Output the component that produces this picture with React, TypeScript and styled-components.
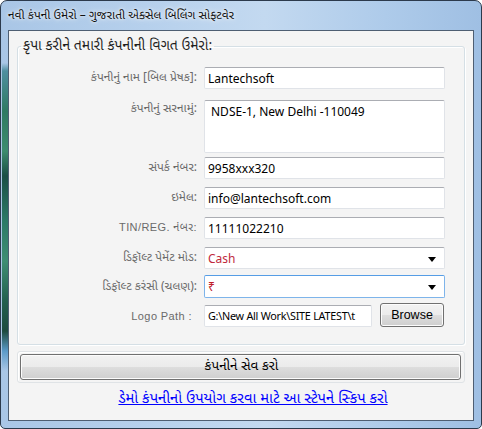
import React from "react";
import styled, { createGlobalStyle } from "styled-components";

const Global = createGlobalStyle`
  html, body { margin: 0; padding: 0; background: #ffffff; }
  * { box-sizing: border-box; }
`;

const GU = `"Noto Sans Gujarati", "Shruti", "Lohit Gujarati", "Noto Sans", "DejaVu Sans", sans-serif`;
const UI = `"Noto Sans", "Open Sans", "DejaVu Sans", sans-serif`;

const Window = styled.div`
  width: 482px;
  height: 429px;
  border: 1px solid #2c3a4c;
  border-radius: 7px 7px 5px 5px;
  display: flex;
  flex-direction: column;
  padding: 0 7px 7px 7px;
  background:
    linear-gradient(
        to bottom,
        rgba(0, 0, 0, 0) 0px,
        rgba(0, 0, 0, 0) 62px,
        #4f8fa0 70px,
        #2f7a62 110px,
        #3d8c6e 150px,
        #1b4f45 175px,
        #2c7a66 220px,
        #3f8e73 260px,
        #23604f 300px,
        #1d4a3e 330px,
        #5b9ac8 350px,
        rgba(0, 0, 0, 0) 370px
      )
      1px 0 / 6px 100% no-repeat,
    linear-gradient(
      to right,
      #a9c6e6 0%,
      #b6d0ec 30%,
      #c3d9f0 55%,
      #aecbea 80%,
      #9fbfe3 100%
    );
`;

const TitleBar = styled.div`
  height: 29px;
  display: flex;
  align-items: center;
  font-family: ${GU};
  font-size: 12px;
  color: #111;
  text-shadow: 0 0 6px rgba(255, 255, 255, 0.9), 0 0 3px rgba(255, 255, 255, 0.9);
`;

const Client = styled.div`
  flex: 1;
  border: 1px solid #4e5e72;
  background: #f4f4f4;
  display: flex;
  flex-direction: column;
  padding: 0 8px;
`;

const Group = styled.fieldset`
  margin: 6px 0 0 0;
  padding: 0 0 17px 0;
  border: 1px solid #d5dfe5;
  border-radius: 3px;
  box-shadow: inset 1px 1px 0 #ffffff, 1px 1px 0 #ffffff;
`;

const Legend = styled.legend`
  margin-left: 3px;
  padding: 0 2px;
  font-family: ${GU};
  font-size: 14px;
  color: #1e1e1e;
  line-height: 19px;
`;

const Row = styled.div<{ $mt: number; $top?: boolean }>`
  display: flex;
  align-items: ${(p) => (p.$top ? "flex-start" : "center")};
  margin-top: ${(p) => p.$mt}px;
`;

const Label = styled.div<{ $latin?: boolean; $pt?: number; $pr?: number }>`
  width: 186px;
  padding-right: ${(p) => p.$pr ?? 7}px;
  padding-top: ${(p) => p.$pt ?? 0}px;
  text-align: right;
  font-family: ${(p) => (p.$latin ? `"Liberation Sans", Arial, ${GU}` : GU)};
  font-size: ${(p) => (p.$latin ? 11 : 12)}px;
  color: #6a6a6a;
  white-space: nowrap;
  letter-spacing: ${(p) => (p.$latin ? "0.4px" : "0")};
`;

const Field = styled.div<{
  $w?: number;
  $h?: number;
  $focus?: boolean;
  $pl?: number;
  $pt?: number;
  $pr?: number;
  $color?: string;
  $size?: number;
}>`
  width: ${(p) => p.$w ?? 241}px;
  height: ${(p) => p.$h ?? 22}px;
  background: #ffffff;
  border: 1px solid ${(p) => (p.$focus ? "#7eb4ea" : "#e0e3e8")};
  border-top-color: ${(p) => (p.$focus ? "#569de5" : "#abadb3")};
  border-radius: 2px;
  display: flex;
  align-items: ${(p) => (p.$pt ? "flex-start" : "center")};
  padding-left: ${(p) => p.$pl ?? 3}px;
  padding-top: ${(p) => p.$pt ?? 0}px;
  padding-right: ${(p) => p.$pr ?? 8}px;
  font-family: ${UI};
  font-size: ${(p) => p.$size ?? 12}px;
  color: ${(p) => p.$color ?? "#000"};
  white-space: nowrap;
  overflow: hidden;
`;

const FieldText = styled.span<{ $ls?: number }>`
  flex: 1;
  overflow: hidden;
  letter-spacing: ${(p) => p.$ls ?? 0}px;
`;

const Arrow = styled.span`
  width: 0;
  height: 0;
  border-left: 4px solid transparent;
  border-right: 4px solid transparent;
  border-top: 5px solid #000;
  margin-top: 2px;
`;

const WinButton = styled.button<{ $w?: number; $h?: number }>`
  width: ${(p) => (p.$w ? `${p.$w}px` : "100%")};
  height: ${(p) => p.$h ?? 26}px;
  border: 1px solid #707070;
  border-radius: 3px;
  background: linear-gradient(to bottom, #f2f2f2 0%, #ebebeb 50%, #dddddd 51%, #cfcfcf 100%);
  box-shadow: inset 0 0 0 1px #fcfcfc;
  padding: 0;
  font-size: 12px;
  color: #000;
  cursor: pointer;
`;

const BrowseButton = styled(WinButton)`
  font-family: "Liberation Sans", Arial, sans-serif;
  font-size: 12.5px;
  margin-left: 8px;
  margin-top: -1px;
`;

const SavePanel = styled.div`
  margin-top: 6px;
  padding: 2px 3px 2px 2px;
  border: 1px solid #dfe3e6;
  border-radius: 3px;
  box-shadow: inset 1px 1px 0 #ffffff;
`;

const SaveButton = styled(WinButton)`
  font-family: ${GU};
  font-size: 13.5px;
  padding-left: 2px;
`;

const LinkRow = styled.div`
  flex: 1;
  display: flex;
  justify-content: center;
  padding-top: 7px;
  padding-left: 24px;
`;

const SkipLink = styled.a`
  font-family: ${GU};
  font-size: 14.8px;
  color: #0000ff;
  text-decoration: underline;
  cursor: pointer;
`;

export default function App() {
  return (
    <>
      <Global />
      <Window>
        <TitleBar>નવી કંપની ઉમેરો – ગુજરાતી એક્સેલ બિલિંગ સોફ્ટવેર</TitleBar>
        <Client>
          <Group>
            <Legend>કૃપા કરીને તમારી કંપનીની વિગત ઉમેરો:</Legend>
            <Row $mt={11}>
              <Label>કંપનીનું નામ [બિલ પ્રેષક]:</Label>
              <Field>Lantechsoft</Field>
            </Row>
            <Row $mt={11} $top>
              <Label $pt={1}>કંપનીનું સરનામું:</Label>
              <Field $h={53} $pl={6} $pt={2}>
                NDSE-1, New Delhi -110049
              </Field>
            </Row>
            <Row $mt={4}>
              <Label>સંપર્ક નંબર:</Label>
              <Field>9958xxx320</Field>
            </Row>
            <Row $mt={8}>
              <Label>ઇમેલ:</Label>
              <Field>info@lantechsoft.com</Field>
            </Row>
            <Row $mt={8}>
              <Label $latin>TIN/REG. નંબર:</Label>
              <Field>11111022210</Field>
            </Row>
            <Row $mt={8}>
              <Label>ડિફૉલ્ટ પેમેંટ મોડ:</Label>
              <Field $color="#c0283c">
                <FieldText>Cash</FieldText>
                <Arrow />
              </Field>
            </Row>
            <Row $mt={6}>
              <Label>ડિફૉલ્ટ કરંસી (ચલણ):</Label>
              <Field $h={23} $focus $color="#c0202a">
                <FieldText>₹</FieldText>
                <Arrow />
              </Field>
            </Row>
            <Row $mt={6}>
              <Label $latin $pr={12}>Logo Path :</Label>
              <Field $w={168} $pl={3} $pr={1} $size={10.8}>
                <FieldText $ls={-0.25}>G:\New All Work\SITE LATEST\t</FieldText>
              </Field>
              <BrowseButton $w={64} $h={24}>Browse</BrowseButton>
            </Row>
          </Group>
          <SavePanel>
            <SaveButton>કંપનીને સેવ કરો</SaveButton>
          </SavePanel>
          <LinkRow>
            <SkipLink>ડેમો કંપનીનો ઉપયોગ કરવા માટે આ સ્ટેપને સ્કિપ કરો</SkipLink>
          </LinkRow>
        </Client>
      </Window>
    </>
  );
}
